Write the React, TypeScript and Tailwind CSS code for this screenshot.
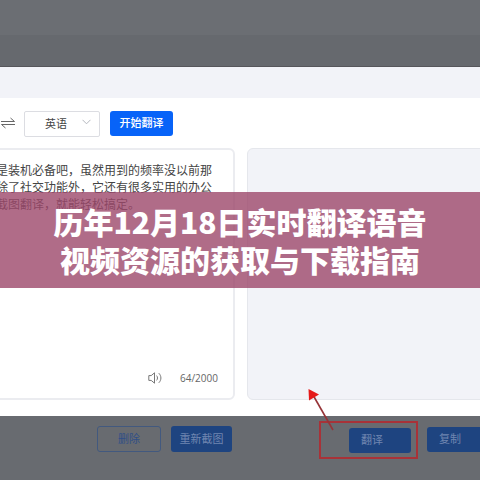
import React from 'react';

const sourceText = [
  '是装机必备吧，虽然用到的频率没以前那',
  '除了社交功能外，它还有很多实用的办公',
  '截图翻译，就能轻松搞定。',
].join('\n');

const SwapIcon = () => (
  <svg width="16" height="12" viewBox="0 0 16 12" fill="none" stroke="#666" aria-hidden>
    <path d="M1 4.5h13.5L10.5 1" />
    <path d="M15 7.5H1.5l4 3.5" />
  </svg>
);

const SpeakerIcon = () => (
  <svg width="14" height="12" viewBox="0 0 14 12" fill="none" stroke="#777" aria-hidden>
    <path d="M.8 3.6h2.4L6.5 .8v10.4L3.2 8.4H.8z" strokeLinejoin="round" />
    <path d="M8.6 3.6c1.2 1.4 1.2 3.4 0 4.8M10.8 1.2c2.8 2.8 2.8 6.8 0 9.6" />
  </svg>
);

const Toolbar = () => (
  <div className="flex h-[50px] items-center">
    <button type="button" aria-label="交换语言" className="mr-2 flex">
      <SwapIcon />
    </button>
    <div className="relative mr-[10px]">
      <select
        aria-label="目标语言"
        className="h-[26px] w-[76px] appearance-none rounded-xs border border-[#dcdde2] bg-white pb-[2px] pl-5 text-[11px] text-[#444]"
      >
        <option>英语</option>
      </select>
      <svg
        className="pointer-events-none absolute top-[10px] right-[9px]"
        width="9"
        height="6"
        viewBox="0 0 9 6"
        fill="none"
        stroke="#b4b7be"
        aria-hidden
      >
        <path d="M.5 .8l4 4 4-4" />
      </svg>
    </div>
    <button
      type="button"
      className="h-[25px] w-[63px] rounded-[3px] bg-[#0763f8] pb-[2px] text-[11px] font-medium text-white"
    >
      开始翻译
    </button>
  </div>
);

const Panels = () => (
  <div className="grid grid-cols-[235px_1fr] gap-3">
    <div className="-ml-2 flex h-[252px] flex-col rounded-md border-2 border-[#ebecf0] bg-white">
      <textarea
        readOnly
        aria-label="原文"
        value={sourceText}
        className="w-full flex-1 resize-none overflow-hidden pt-[11px] pl-[2px] text-[12px] leading-[17px] whitespace-pre text-[#444] outline-none"
      />
      <div className="flex h-10 items-center justify-end gap-[18px] pr-[15px]">
        <button type="button" aria-label="朗读">
          <SpeakerIcon />
        </button>
        <span className="font-['Open_Sans','Noto_Sans_CJK_SC',sans-serif] text-[10px] text-[#666]">64/2000</span>
      </div>
    </div>
    <div className="-mr-2 rounded-md border border-[#e5e7ec] bg-[#f2f3f8]" />
  </div>
);

const Actions = () => (
  <div className="flex flex-1 items-start bg-[#686b70] pt-[5px] pl-[97px] text-[11px] text-[#7086b0]">
    <button type="button" className="mt-[5px] mr-[10px] h-[26px] w-16 rounded-[3px] border border-[#42597f] pb-[2px] text-[#304f87]">
      删除
    </button>
    <button type="button" className="mt-[5px] h-[26px] w-[61px] rounded-[3px] bg-[#1e4480] pb-[2px]">
      重新截图
    </button>
    <div className="relative ml-[87px] flex h-[38px] w-[99px] shrink-0 items-center justify-end border-2 border-[#a83238] pr-[5px]">
      <button type="button" className="h-[25px] w-[62px] rounded-[3px] bg-[#1e4480] pr-4 pb-[2px]">
        翻译
      </button>
      <svg
        className="absolute -top-[36px] -left-[14px]"
        width="28"
        height="46"
        viewBox="0 0 28 46"
        aria-hidden
      >
        <path d="M6 8l20 35" stroke="#963438" strokeWidth="1.6" />
        <path d="M1.5 2l10.5 5.5-10 6z" fill="#e51a1a" />
      </svg>
    </div>
    <button type="button" className="mt-[6px] -mr-4 ml-[9px] h-[25px] w-[62px] shrink-0 rounded-[3px] bg-[#1e4480] pr-4 pb-[2px]">
      复制
    </button>
  </div>
);

export default function App() {
  return (
    <main className="relative flex min-h-screen flex-col overflow-hidden bg-white font-['Noto_Sans_CJK_SC',sans-serif]">
      <div className="h-[67px] border-b border-[#56565b] bg-[#66696e]">
        <div className="h-[35px] bg-[#6b6e73]" />
      </div>
      <div className="h-[31px] bg-[#f2f3f8]" />
      <div className="pb-4">
        <Toolbar />
        <Panels />
      </div>
      <Actions />
      <div className="absolute inset-x-0 top-1/2 -translate-y-1/2 bg-[#9c476a]/80 py-[10px]">
        <h1 className="text-center text-[30px] leading-[38px] font-black text-white">
          历年12月18日实时翻译语音
          <br />
          视频资源的获取与下载指南
        </h1>
      </div>
    </main>
  );
}
